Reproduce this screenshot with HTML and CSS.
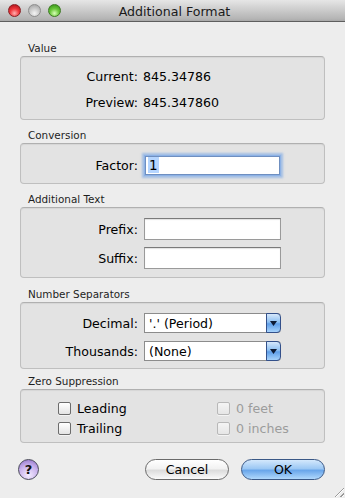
FILE: index.html
```html
<!DOCTYPE html>
<html>
<head>
<meta charset="utf-8">
<link rel="stylesheet" href="styles.css">
</head>
<body>
<div class="window">
  <div class="titlebar">
    <div class="lights">
      <span class="light red"></span>
      <span class="light gray"></span>
      <span class="light green"></span>
    </div>
    <div class="title">Additional Format</div>
  </div>

  <div class="content">
    <div class="section s-value">
      <div class="glabel">Value</div>
      <div class="gbox value-box">
        <div class="vrow"><span class="lbl">Current:</span><span class="val">845.34786</span></div>
        <div class="vrow"><span class="lbl">Preview:</span><span class="val">845.347860</span></div>
      </div>
    </div>

    <div class="section s-conv">
      <div class="glabel">Conversion</div>
      <div class="gbox conv-box">
        <div class="frow"><span class="lbl">Factor:</span><div class="field focus"><span class="sel">1</span></div></div>
      </div>
    </div>

    <div class="section s-text">
      <div class="glabel">Additional Text</div>
      <div class="gbox text-box">
        <div class="frow"><span class="lbl">Prefix:</span><div class="field"></div></div>
        <div class="frow"><span class="lbl">Suffix:</span><div class="field"></div></div>
      </div>
    </div>

    <div class="section s-sep">
      <div class="glabel">Number Separators</div>
      <div class="gbox sep-box">
        <div class="frow"><span class="lbl">Decimal:</span><div class="popup"><span class="ptext">'.' (Period)</span><span class="parrow"><svg width="7" height="5" viewBox="0 0 7 5"><path d="M0 0H7L3.5 5Z" fill="#0d1a33"/></svg></span></div></div>
        <div class="frow"><span class="lbl">Thousands:</span><div class="popup"><span class="ptext">(None)</span><span class="parrow"><svg width="7" height="5" viewBox="0 0 7 5"><path d="M0 0H7L3.5 5Z" fill="#0d1a33"/></svg></span></div></div>
      </div>
    </div>

    <div class="section s-zero">
      <div class="glabel">Zero Suppression</div>
      <div class="gbox zero-box">
        <div class="crow"><span class="check"></span><span class="clabel">Leading</span></div>
        <div class="crow disabled"><span class="check"></span><span class="clabel">0 feet</span></div>
        <div class="crow"><span class="check"></span><span class="clabel">Trailing</span></div>
        <div class="crow disabled"><span class="check"></span><span class="clabel">0 inches</span></div>
      </div>
    </div>

    <div class="buttons">
      <div class="help">?</div>
      <div class="spacer"></div>
      <div class="btn cancel">Cancel</div>
      <div class="btn ok">OK</div>
    </div>
  </div>
  <div class="grip"></div>
</div>
</body>
</html>
```

FILE: styles.css
```css
html, body {
  margin: 0;
  padding: 0;
}
body {
  width: 345px;
  height: 498px;
  overflow: hidden;
  font-family: "DejaVu Sans", "Liberation Sans", sans-serif;
  color: #000;
}
.window {
  position: relative;
  width: 345px;
  height: 498px;
  background: #ededed;
}
.titlebar {
  position: relative;
  height: 21px;
  background: linear-gradient(#e6e6e6, #b4b4b4 90%, #a8a8a8);
  border-bottom: 1px solid #5e5e5e;
  display: flex;
  align-items: center;
  justify-content: center;
}
.lights {
  position: absolute;
  left: 8px;
  top: 4px;
  display: flex;
  gap: 7px;
}
.light {
  width: 13px;
  height: 13px;
  border-radius: 50%;
  box-sizing: border-box;
}
.light.red {
  background: radial-gradient(circle at 50% 75%, #ffb0b0 0, #f0383c 45%, #a00c14 100%);
  border: 1px solid #8a1e22;
}
.light.gray {
  background: radial-gradient(circle at 50% 75%, #f4f4f4 0, #c8c8c8 50%, #9a9a9a 100%);
  border: 1px solid #8e8e8e;
}
.light.green {
  background: radial-gradient(circle at 50% 75%, #d8ffb8 0, #6cc83c 45%, #2e8a12 100%);
  border: 1px solid #3c7a22;
}
.title {
  font-size: 12.6px;
  color: #1a1a1a;
  margin-left: 4px;
  padding-top: 1px;
}
.content {
  padding: 0 20px;
  display: flex;
  flex-direction: column;
}
.glabel {
  font-size: 10.4px;
  line-height: 13px;
  height: 13px;
  margin-bottom: 1px;
  padding-left: 8px;
  color: #1e1e1e;
}
.gbox {
  background: #e3e3e3;
  border: 1px solid #bfbfbf;
  border-top-color: #b0b0b0;
  border-radius: 4px;
  box-shadow: inset 0 1px 1px rgba(0,0,0,0.06);
}
.s-value { margin-top: 20px; }
.s-conv { margin-top: 9px; }
.s-text { margin-top: 9px; }
.s-sep { margin-top: 10px; }
.s-zero { margin-top: 6px; }

.lbl {
  width: 117px;
  text-align: right;
  font-size: 12.6px;
  flex: none;
}
.value-box {
  padding: 11px 0 9px;
  display: flex;
  flex-direction: column;
  gap: 10px;
}
.vrow {
  display: flex;
  align-items: center;
  height: 16px;
  font-size: 12.6px;
}
.val {
  margin-left: 5px;
}
.frow {
  display: flex;
  align-items: center;
  height: 22px;
}
.frow .lbl { margin-right: 6px; }
.conv-box {
  padding: 10px 0 7px;
}
.text-box {
  padding: 10px 0 8px;
  display: flex;
  flex-direction: column;
  gap: 7px;
}
.field {
  width: 137px;
  height: 22px;
  box-sizing: border-box;
  background: #fff;
  border: 1px solid #9a9a9a;
  border-top-color: #7a7a7a;
  box-shadow: inset 0 1px 1px rgba(0,0,0,0.12);
  display: flex;
  align-items: center;
  padding-left: 2px;
  font-size: 13.5px;
}
.field.focus {
  height: 19px;
  width: 135px;
  margin-left: 1px;
  border-color: #6f8fc0;
  box-shadow: 0 0 0 1px #8db2e6, 0 0 2px 3px rgba(110,160,230,0.55);
}
.sel {
  background: #b5d5ff;
  padding: 0 1px;
  line-height: 16px;
}
.sep-box {
  padding: 10px 0 7px;
  display: flex;
  flex-direction: column;
  gap: 8px;
}
.sep-box .frow { height: 20px; }
.popup {
  width: 137px;
  height: 20px;
  box-sizing: border-box;
  display: flex;
  background: #fff;
  border: 1px solid #8c8c8c;
  border-right: none;
  border-radius: 0 4px 4px 0;
}
.ptext {
  flex: 1;
  font-size: 12.6px;
  padding-left: 4px;
  line-height: 19px;
}
.parrow {
  width: 13px;
  margin-top: -1px;
  margin-bottom: -1px;
  border: 1px solid #33508a;
  border-radius: 0 4px 4px 0;
  background: linear-gradient(#d6e8fb, #8ec0f2 45%, #5e9ee8 55%, #a6d2fb);
  display: flex;
  align-items: center;
  justify-content: center;
}
.zero-box {
  padding: 9px 0 5px 37px;
  display: grid;
  grid-template-columns: 159px 1fr;
  row-gap: 2px;
}
.crow {
  display: flex;
  align-items: center;
  height: 18px;
}
.check {
  width: 13px;
  height: 13px;
  box-sizing: border-box;
  border: 1px solid #6c6c6c;
  border-radius: 2px;
  background: linear-gradient(#ffffff, #e4e4e4);
  box-shadow: 0 1px 0 rgba(255,255,255,0.6);
}
.clabel {
  margin-left: 6px;
  font-size: 12.6px;
}
.crow.disabled .check {
  border-color: #b8b8b8;
  background: linear-gradient(#f4f4f4, #e6e6e6);
}
.crow.disabled .clabel { color: #9c9c9c; }

.buttons {
  margin-top: 16px;
  display: flex;
  align-items: center;
  height: 21px;
}
.help {
  width: 21px;
  height: 21px;
  box-sizing: border-box;
  margin-left: -2px;
  border-radius: 50%;
  border: 1px solid #4a4a5a;
  background: radial-gradient(circle at 50% 80%, #f4ecff 0, #c8b0ec 55%, #8a6ac4 100%);
  font-weight: bold;
  font-size: 13px;
  display: flex;
  align-items: center;
  justify-content: center;
  color: #111;
}
.spacer { flex: 1; }
.btn {
  height: 21px;
  width: 84px;
  box-sizing: border-box;
  border-radius: 11px;
  display: flex;
  align-items: center;
  justify-content: center;
  font-size: 12.6px;
}
.cancel {
  border: 1px solid #6a6a6a;
  background: linear-gradient(#ffffff, #f2f2f2 45%, #dcdcdc 55%, #fafafa);
  margin-right: 12px;
}
.ok {
  border: 1px solid #3a5886;
  background: linear-gradient(#d4e8fc, #9cc8f4 45%, #6aa6ea 55%, #b0d8fc);
}
.grip {
  position: absolute;
  right: 1px;
  bottom: 1px;
  width: 12px;
  height: 12px;
  background: repeating-linear-gradient(135deg, transparent 0 2px, #9a9a9a 2px 3px, #ffffff 3px 4px);
  clip-path: polygon(100% 0, 100% 100%, 0 100%);
}
```
